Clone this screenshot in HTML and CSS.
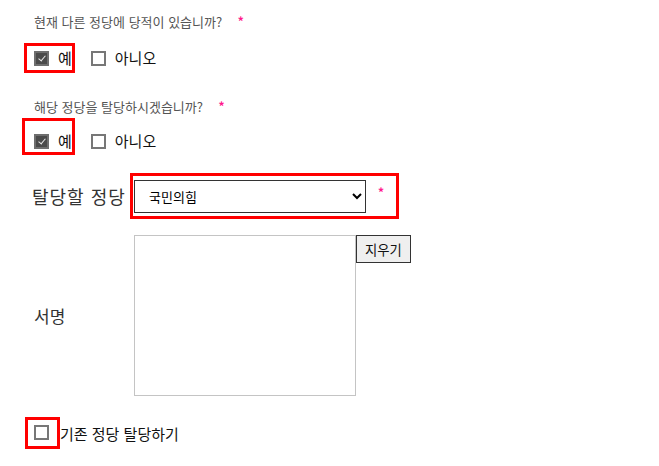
FILE: index.html
```html
<html lang="ko">
<head>
    <meta charset="UTF-8">
    <meta name="viewport" content="width=device-width, initial-scale=1.0">
    <title>정당 탈당</title>

    <link rel="stylesheet" href="styles.css">
</head>
<body>
    <div class="form">
        <p class="form__q form__q--first">현재 다른 정당에 당적이 있습니까? <span class="req">*</span></p>
        <div class="form__opts">
            <label class="opt hl hl--one"><input type="checkbox" checked> 예</label>
            <label class="opt"><input type="checkbox"> 아니오</label>
        </div>

        <p class="form__q">해당 정당을 탈당하시겠습니까? <span class="req">*</span></p>
        <div class="form__opts">
            <label class="opt hl hl--two"><input type="checkbox" checked> 예</label>
            <label class="opt"><input type="checkbox"> 아니오</label>
        </div>

        <div class="party">
            <label class="party__label" for="party">탈당할 정당</label>
            <div class="hl hl--party">
                <select id="party">
                    <option>국민의힘</option>
                    <option>더불어민주당</option>
                    <option>정의당</option>
                </select>
                <span class="req req--party">*</span>
            </div>
        </div>

        <div class="sign">
            <p class="sign__label">서명</p>
            <canvas class="sign__pad" width="220" height="159"></canvas>
            <button class="sign__clear" id="clear">지우기</button>
        </div>

        <label class="agree">
            <span class="hl hl--agree"><input type="checkbox"></span>기존 정당 탈당하기
        </label>
    </div>
    <script>
        let pad = document.querySelector(".sign__pad");
        let ctx = pad.getContext("2d");
        let drawing = false;

        pad.addEventListener("mousedown", (e) => {
            drawing = true;
            ctx.beginPath();
            ctx.moveTo(e.offsetX, e.offsetY);
        });
        pad.addEventListener("mousemove", (e) => {
            if (!drawing) return;
            ctx.lineTo(e.offsetX, e.offsetY);
            ctx.stroke();
        });
        window.addEventListener("mouseup", () => {
            drawing = false;
        });
        document.getElementById("clear").addEventListener("click", () => {
            ctx.clearRect(0, 0, pad.width, pad.height);
        });
    </script>
</body>
</html>
```

FILE: styles.css
```css
html, body {
    margin: 0;
    background-color: #ffffff;
    font-family: "Noto Sans CJK KR", "Noto Sans", sans-serif;
    color: #111;
}

.form {
    padding-top: 12px;
}

.form__q {
    margin: 24px 0 0 34px;
    font-size: 13px;
    line-height: 18px;
    color: #555;
}

.form__q--first {
    margin-top: 0;
}

.req {
    display: inline-block;
    margin-left: 12px;
    font-size: 12px;
    font-weight: bold;
    color: #ff1a8c;
    vertical-align: 1px;
}

.form__opts {
    display: flex;
    align-items: baseline;
    gap: 16px;
}

.form__opts:nth-of-type(1) {
    margin-top: 12px;
}

.form__opts:nth-of-type(2) {
    margin-top: 2px;
}

.opt {
    display: inline-flex;
    align-items: center;
    gap: 9px;
    font-size: 15px;
    line-height: 18px;
    color: #111;
}

.hl {
    border: 3px solid #ff0000;
}

.hl--one {
    margin-left: 24px;
    padding: 3px 0 3px 7px;
}

.hl--two {
    margin-left: 22px;
    padding: 11px 0 2px 9px;
}

input[type="checkbox"] {
    appearance: none;
    -webkit-appearance: none;
    position: relative;
    width: 15px;
    height: 15px;
    margin: 0;
    border: 2px solid #777;
    background-color: #fff;
    flex: none;
}

input[type="checkbox"]:checked {
    background-color: #4a4a4a;
    border-color: #6e6e6e;
}

input[type="checkbox"]:checked::after {
    content: "";
    position: absolute;
    left: 4px;
    top: 1px;
    width: 3px;
    height: 6px;
    border-right: 1px solid #e8e8e8;
    border-bottom: 1px solid #e8e8e8;
    transform: rotate(40deg);
}

.party {
    display: flex;
    align-items: center;
    margin: 18px 0 0 32px;
}

.party__label {
    width: 98px;
    font-size: 18px;
    letter-spacing: 1px;
    color: #333;
}

.hl--party {
    display: flex;
    align-items: flex-start;
    width: 269px;
    height: 46px;
    box-sizing: border-box;
    padding: 4px 0 0 1px;
}

.hl--party select {
    width: 232px;
    height: 33px;
    padding: 0 8px 0 10px;
    border: 1px solid #333;
    border-radius: 0;
    background-color: #fff;
    font-family: "Noto Sans CJK KR", sans-serif;
    font-size: 13px;
    color: #000;
}

.req--party {
    margin: 3px 0 0 12px;
}

.sign {
    display: flex;
    align-items: flex-start;
    margin: 16px 0 0 34px;
}

.sign__label {
    width: 100px;
    margin: 0;
    align-self: center;
    font-size: 17px;
    color: #333;
}

.sign__pad {
    display: block;
    border: 1px solid #c4c4c4;
    background-color: #fff;
}

.sign__clear {
    width: 55px;
    height: 28px;
    padding: 0;
    border: 1px solid #333;
    border-radius: 0;
    background-color: #efefef;
    font-family: "Noto Sans CJK KR", sans-serif;
    font-size: 13.33px;
    color: #111;
}

.agree {
    display: flex;
    align-items: center;
    margin: 21px 0 0 25px;
    font-size: 15px;
    color: #111;
}

.hl--agree {
    display: flex;
    padding: 5px 8px 6px 6px;
}
```
